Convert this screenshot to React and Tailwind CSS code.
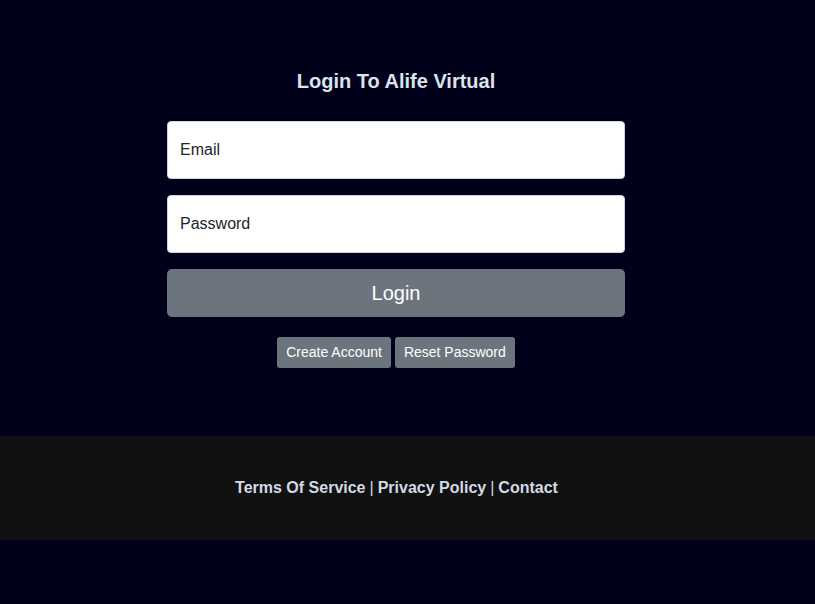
export default function App() {
  return (
    <div className="min-h-[604px] bg-[#00001a] font-['Liberation_Sans',Arial,sans-serif]">
      <div className="flex flex-col items-center pt-[67px] pb-[68px] pr-[23px]">
        <h1 className="text-[20px] leading-[28px] font-bold text-[#dde3ec]">Login To Alife Virtual</h1>
        <form className="w-[458px] mt-[26px] flex flex-col gap-4" onSubmit={(e) => e.preventDefault()}>
          <input
            type="email"
            placeholder="Email"
            className="h-[58px] w-full rounded-[4px] border border-[#ced4da] bg-white px-3 text-[16px] text-[#212529] placeholder:text-[#212529] outline-none"
          />
          <input
            type="password"
            placeholder="Password"
            className="h-[58px] w-full rounded-[4px] border border-[#ced4da] bg-white px-3 text-[16px] text-[#212529] placeholder:text-[#212529] outline-none"
          />
          <button type="submit" className="h-[48px] w-full rounded-[5px] bg-[#6c757d] text-[20px] text-white">
            Login
          </button>
        </form>
        <div className="mt-5 flex gap-1">
          <button className="h-[31px] rounded-[3px] bg-[#6c757d] px-[9px] text-[14px] text-white">Create Account</button>
          <button className="h-[31px] rounded-[3px] bg-[#6c757d] px-[9px] text-[14px] text-white">Reset Password</button>
        </div>
      </div>
      <footer className="h-[104px] bg-[#111111] flex items-center justify-center pr-[22px] text-[16px] font-bold text-[#d3dae3]">
        <a href="#">Terms Of Service</a>
        <span className="font-normal mx-1">|</span>
        <a href="#">Privacy Policy</a>
        <span className="font-normal mx-1">|</span>
        <a href="#">Contact</a>
      </footer>
    </div>
  );
}
